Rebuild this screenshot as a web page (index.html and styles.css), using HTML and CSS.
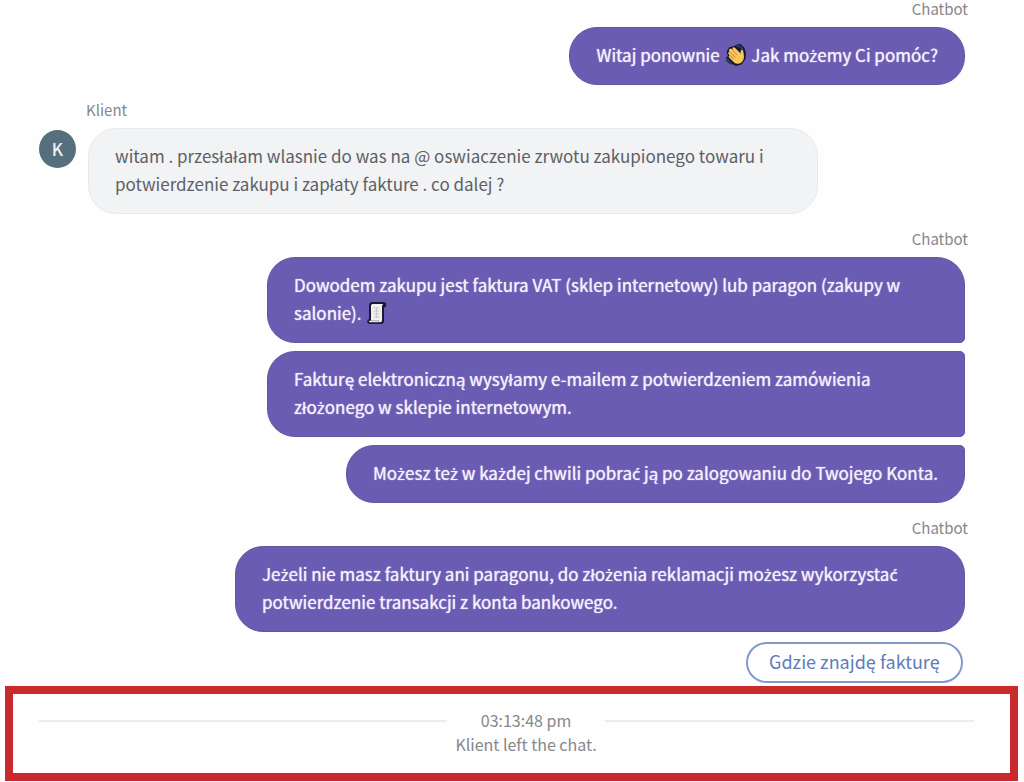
FILE: index.html
```html
<!DOCTYPE html>
<html lang="pl">
<head>
    <meta charset="UTF-8">
    <meta name="viewport" content="width=device-width, initial-scale=1">
    <title>Chat</title>
    <link rel="stylesheet" href="styles.css">
</head>
<body>
<main class="chat">
    <section class="group bot">
        <div class="name">Chatbot</div>
        <p class="msg">Witaj ponownie <svg class="emoji" viewBox="0 0 22 24" role="img" aria-label="wave">
            <path d="M12 1.5 L15.5 1 L19.5 5 L21 10 L20.5 16 L16.5 21.5 L11 23 L7 21 L5.5 21.5 L1.5 18 L1 14.5 L3 13 L1.5 9 L4 4.5 L9 3 Z" fill="#17182c"/>
            <path d="M12 3 Q16 3 17.5 7 M2.5 16 Q3 19 6 20" fill="none" stroke="#263d72" stroke-width="2" stroke-linecap="round"/>
            <path d="M4.4 6.2 Q5.4 5 6.6 6 L7.6 6.8 Q7 4.4 8.4 4.2 Q9.4 4 10.4 5.2 L15.6 10.4 Q15.4 7 17 6.8 Q18.4 7 18.6 10 L19 14 Q18.6 18.4 15.6 20 Q12 21.8 8.8 19.2 L4 14.6 Q3 13 4.6 12.6 L3.2 10.6 Q2.6 9.2 4.4 9 Q3.4 7.4 4.4 6.2 Z" fill="#f8c75a"/>
            <path d="M7.4 7.2 L12 11.8 M5 9.4 L10.2 14.2 M5 12.8 L8.6 16" fill="none" stroke="#c98b32" stroke-width="1" stroke-linecap="round"/>
        </svg> Jak mo<span class="pl">ż</span>emy Ci pomóc?</p>
    </section>

    <section class="group client">
        <div class="name">Klient</div>
        <div class="avatar">K</div>
        <p class="msg">witam . przesłałam wlasnie do was na @ oswiaczenie zrwotu zakupionego towaru i potwierdzenie zakupu i zapłaty fakture . co dalej ?</p>
    </section>

    <section class="group bot">
        <div class="name">Chatbot</div>
        <p class="msg narrow">Dowodem zakupu jest faktura VAT (sklep internetowy) lub paragon (zakupy w salonie). <svg class="emoji" viewBox="0 0 22 24" role="img" aria-label="receipt">
            <path d="M5.5 1 H17.5 Q20.5 1.4 20.2 4.6 Q20 6.4 18 6.6 V19 Q18.4 22.6 15.6 23 H4 Q1 22.8 1.2 20.4 Q1.4 18.4 3 18 V4 Q3 1.6 5.5 1 Z" fill="#1b1a33"/>
            <path d="M6.6 3 H17.4 Q16 3.4 16 5.6 V19 Q16 21.2 14.4 21.2 H4 Q2.8 21 3 19.8 H5 V4.6 Q5.2 3.2 6.6 3 Z" fill="#f3f2f0"/>
            <path d="M7.5 7 H13.5 M7.5 10 H13.5 M7.5 13 H13.5 M7.5 16 H13.5 M10.5 6 V17" fill="none" stroke="#c9c8cc" stroke-width="1"/>
            <path d="M5 19.8 H12.6 V21" fill="none" stroke="#a5a4ac" stroke-width="1"/>
        </svg></p>
        <p class="msg narrow">Fakturę elektroniczną wysyłamy e-mailem z potwierdzeniem zamówienia zło<span class="pl">ż</span>onego w sklepie internetowym.</p>
        <p class="msg">Mo<span class="pl">ż</span>esz te<span class="pl">ż</span> w ka<span class="pl">ż</span>dej chwili pobra<span class="pl">ć</span> ją po zalogowaniu do Twojego Konta.</p>
    </section>

    <section class="group bot">
        <div class="name">Chatbot</div>
        <p class="msg">Je<span class="pl">ż</span>eli nie masz faktury ani paragonu, do zło<span class="pl">ż</span>enia reklamacji mo<span class="pl">ż</span>esz wykorzysta<span class="pl">ć</span> potwierdzenie transakcji z konta bankowego.</p>
        <button type="button" class="reply">Gdzie znajdę fakturę</button>
    </section>
</main>

<footer class="ended">
    <div class="line"></div>
    <div class="info">
        <time>03:13:48 pm</time>
        <div>Klient left the chat.</div>
    </div>
    <div class="line"></div>
</footer>
</body>
</html>
```
FILE: styles.css
```css
* {
    box-sizing: border-box;
}

body {
    margin: 0;
    background: #fefefe;
    font-family: "Noto Sans CJK SC", "Noto Sans", sans-serif;
    font-size: 17px;
    line-height: 28px;
    color: #5c6066;
}

.chat {
    display: flex;
    flex-direction: column;
    gap: 15px;
    margin-top: -1px;
    padding: 0 59px 0 39px;
}

.group {
    display: flex;
    flex-direction: column;
    gap: 8px;
}

.name {
    font-size: 15px;
    line-height: 20px;
    color: #85888c;
}

.msg {
    margin: 0;
    padding: 13px 26px 15px;
    max-width: 730px;
    border-radius: 28px;
}

.pl {
    font-family: "Noto Sans", sans-serif;
    line-height: 1;
}

.bot {
    align-items: flex-end;
}

.bot .name {
    margin-right: -3px;
}

.bot .msg {
    background: #6b5cb3;
    border: 1px solid #6355a4;
    color: #f3effc;
    text-shadow: 0 0 1px #f3effc;
}

.bot .narrow {
    width: 698px;
    max-width: 100%;
    border-bottom-right-radius: 5px;
}

.bot .msg + .msg {
    border-top-right-radius: 5px;
}

.client {
    display: grid;
    grid-template-columns: 37px auto;
    justify-content: start;
    column-gap: 12px;
}

.client .name {
    grid-column: 2;
    margin-left: -2px;
}

.client .msg {
    background: #f2f3f5;
    border: 1px solid #e8e9ea;
}

.avatar {
    width: 37px;
    height: 38px;
    margin-top: 2px;
    border-radius: 50%;
    background: #566f7c;
    color: #eef2f4;
    font-weight: 500;
    line-height: 38px;
    text-align: center;
}

.emoji {
    width: 22px;
    height: 24px;
    margin: -4px 1px 0;
    vertical-align: -5px;
}

.reply {
    height: 41px;
    margin: 2px 2px 0 0;
    padding: 0 21px 4px;
    border: 2px solid #8199cb;
    border-radius: 21px;
    background: #fff;
    color: #607bbd;
    font: inherit;
    font-size: 18px;
    cursor: pointer;
}

.ended {
    display: grid;
    grid-template-columns: 408fr 158px 369fr;
    margin: 3px 6px 0 5px;
    padding: 14px 36px 17px 26px;
    border: 8px solid #c92a2b;
    font-size: 16px;
    line-height: 24px;
    color: #85888c;
    text-align: center;
}

.line {
    height: 2px;
    margin-top: 12px;
    background: #ececec;
}
```
